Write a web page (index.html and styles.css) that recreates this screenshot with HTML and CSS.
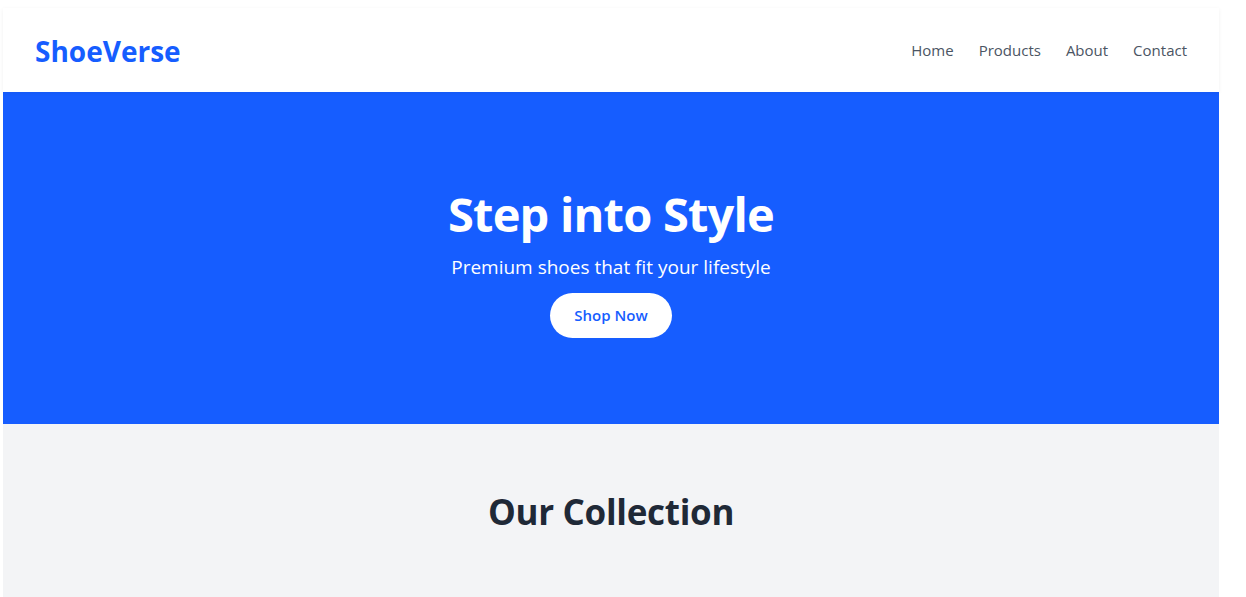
FILE: index.html
```html
<!DOCTYPE html>
<html lang="en">
<head>
<meta charset="utf-8">
<title>ShoeVerse</title>
<link rel="stylesheet" href="styles.css">
</head>
<body>
<div class="page">
  <header class="site-header">
    <a class="logo" href="#">ShoeVerse</a>
    <nav class="nav">
      <a href="#">Home</a>
      <a href="#">Products</a>
      <a href="#">About</a>
      <a href="#">Contact</a>
    </nav>
  </header>
  <section class="hero">
    <h1 class="hero-title">Step into Style</h1>
    <p class="hero-sub">Premium shoes that fit your lifestyle</p>
    <a class="hero-btn" href="#">Shop Now</a>
  </section>
  <section class="collection">
    <h2 class="collection-title">Our Collection</h2>
  </section>
</div>
</body>
</html>
```

FILE: styles.css
```css
* { box-sizing: border-box; }
html, body { margin: 0; padding: 0; background: #ffffff; }
body {
  font-family: "Open Sans", "Noto Sans", sans-serif;
  overflow: hidden;
}
.page {
  width: 1216px;
  margin: 8px 0 0 3px;
}
.site-header {
  height: 84px;
  padding: 0 32px;
  display: flex;
  align-items: center;
  justify-content: space-between;
  background: #ffffff;
  box-shadow: 0 1px 4px rgba(0, 0, 0, 0.06);
  position: relative;
  z-index: 1;
}
.logo {
  font-size: 28px;
  font-weight: 700;
  color: #165dff;
  text-decoration: none;
  letter-spacing: 0;
  margin-top: 2px;
}
.nav {
  display: flex;
  gap: 25px;
}
.nav a {
  font-size: 15px;
  color: #4b5563;
  text-decoration: none;
}
.hero {
  background: #165dff;
  color: #ffffff;
  text-align: center;
  padding: 93px 0 86px;
  display: flex;
  flex-direction: column;
  align-items: center;
}
.hero-title {
  margin: 0 0 9px;
  font-size: 47px;
  line-height: 58px;
  font-weight: 700;
  letter-spacing: -0.8px;
}
.hero-sub {
  margin: 0 0 11px;
  font-size: 19px;
  line-height: 30px;
}
.hero-btn {
  display: inline-block;
  background: #ffffff;
  color: #165dff;
  font-size: 15px;
  font-weight: 600;
  line-height: 21px;
  padding: 12px 24px;
  border-radius: 9999px;
  text-decoration: none;
}
.collection {
  background: #f3f4f6;
  padding: 67px 0 80px;
  text-align: center;
}
.collection-title {
  margin: 0;
  font-size: 35px;
  line-height: 1.2;
  font-weight: 700;
  color: #1f2937;
  letter-spacing: -0.3px;
}
```
